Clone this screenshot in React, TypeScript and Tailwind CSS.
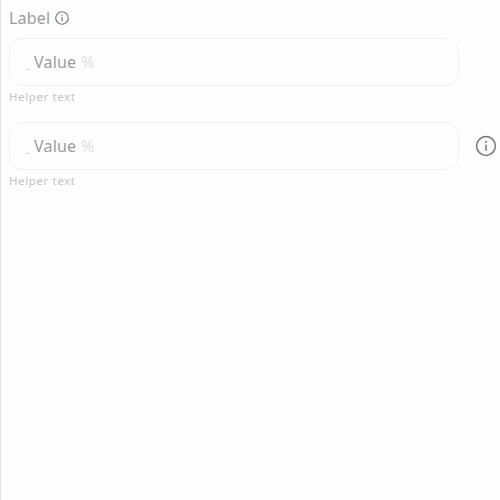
function InfoIcon({ className }: { className: string }) {
  return (
    <svg viewBox="0 0 24 24" fill="none" stroke="currentColor" className={className}>
      <circle cx="12" cy="12" r="9.4" />
      <path d="M12 10.5v6.3" />
      <circle cx="12" cy="7.8" r="1" fill="currentColor" stroke="none" />
    </svg>
  );
}

function Field() {
  return (
    <div className="flex h-12 w-[450px] items-center rounded-[14px] border border-[#f0f0f0] pl-[15px] text-[16px] leading-6">
      <span className="mt-[3px] mr-1 w-[5px] text-[11px] leading-4 text-[#cccccc]">_</span>
      <span className="w-[42px] tracking-[0.2px] text-[#9c9c9c]">Value</span>
      <span className="ml-[5px] text-[#dedede]">%</span>
    </div>
  );
}

function Helper() {
  return <div className="h-4 text-[11.5px] leading-4 tracking-[0.6px] text-[#c4c4c4]">Helper text</div>;
}

export default function App() {
  return (
    <main className="h-[500px] w-[500px] border-l border-[#e5e5e5] bg-[#fefefe] pl-2 pt-[6px] font-['Noto_Sans',sans-serif]">
      <div className="flex h-6 items-center text-[16px] text-[#9c9c9c]">
        <span className="w-[41px] tracking-[0.2px]">Label</span>
        <InfoIcon className="ml-1 h-4 w-4 stroke-[1.8] text-[#777]" />
      </div>
      <div className="mt-2"><Field /></div>
      <div className="mt-[3px]"><Helper /></div>
      <div className="mt-[17px] flex items-center gap-[15px]">
        <Field />
        <InfoIcon className="h-6 w-6 shrink-0 stroke-[1.5] text-[#777]" />
      </div>
      <div className="mt-[3px]"><Helper /></div>
    </main>
  );
}
